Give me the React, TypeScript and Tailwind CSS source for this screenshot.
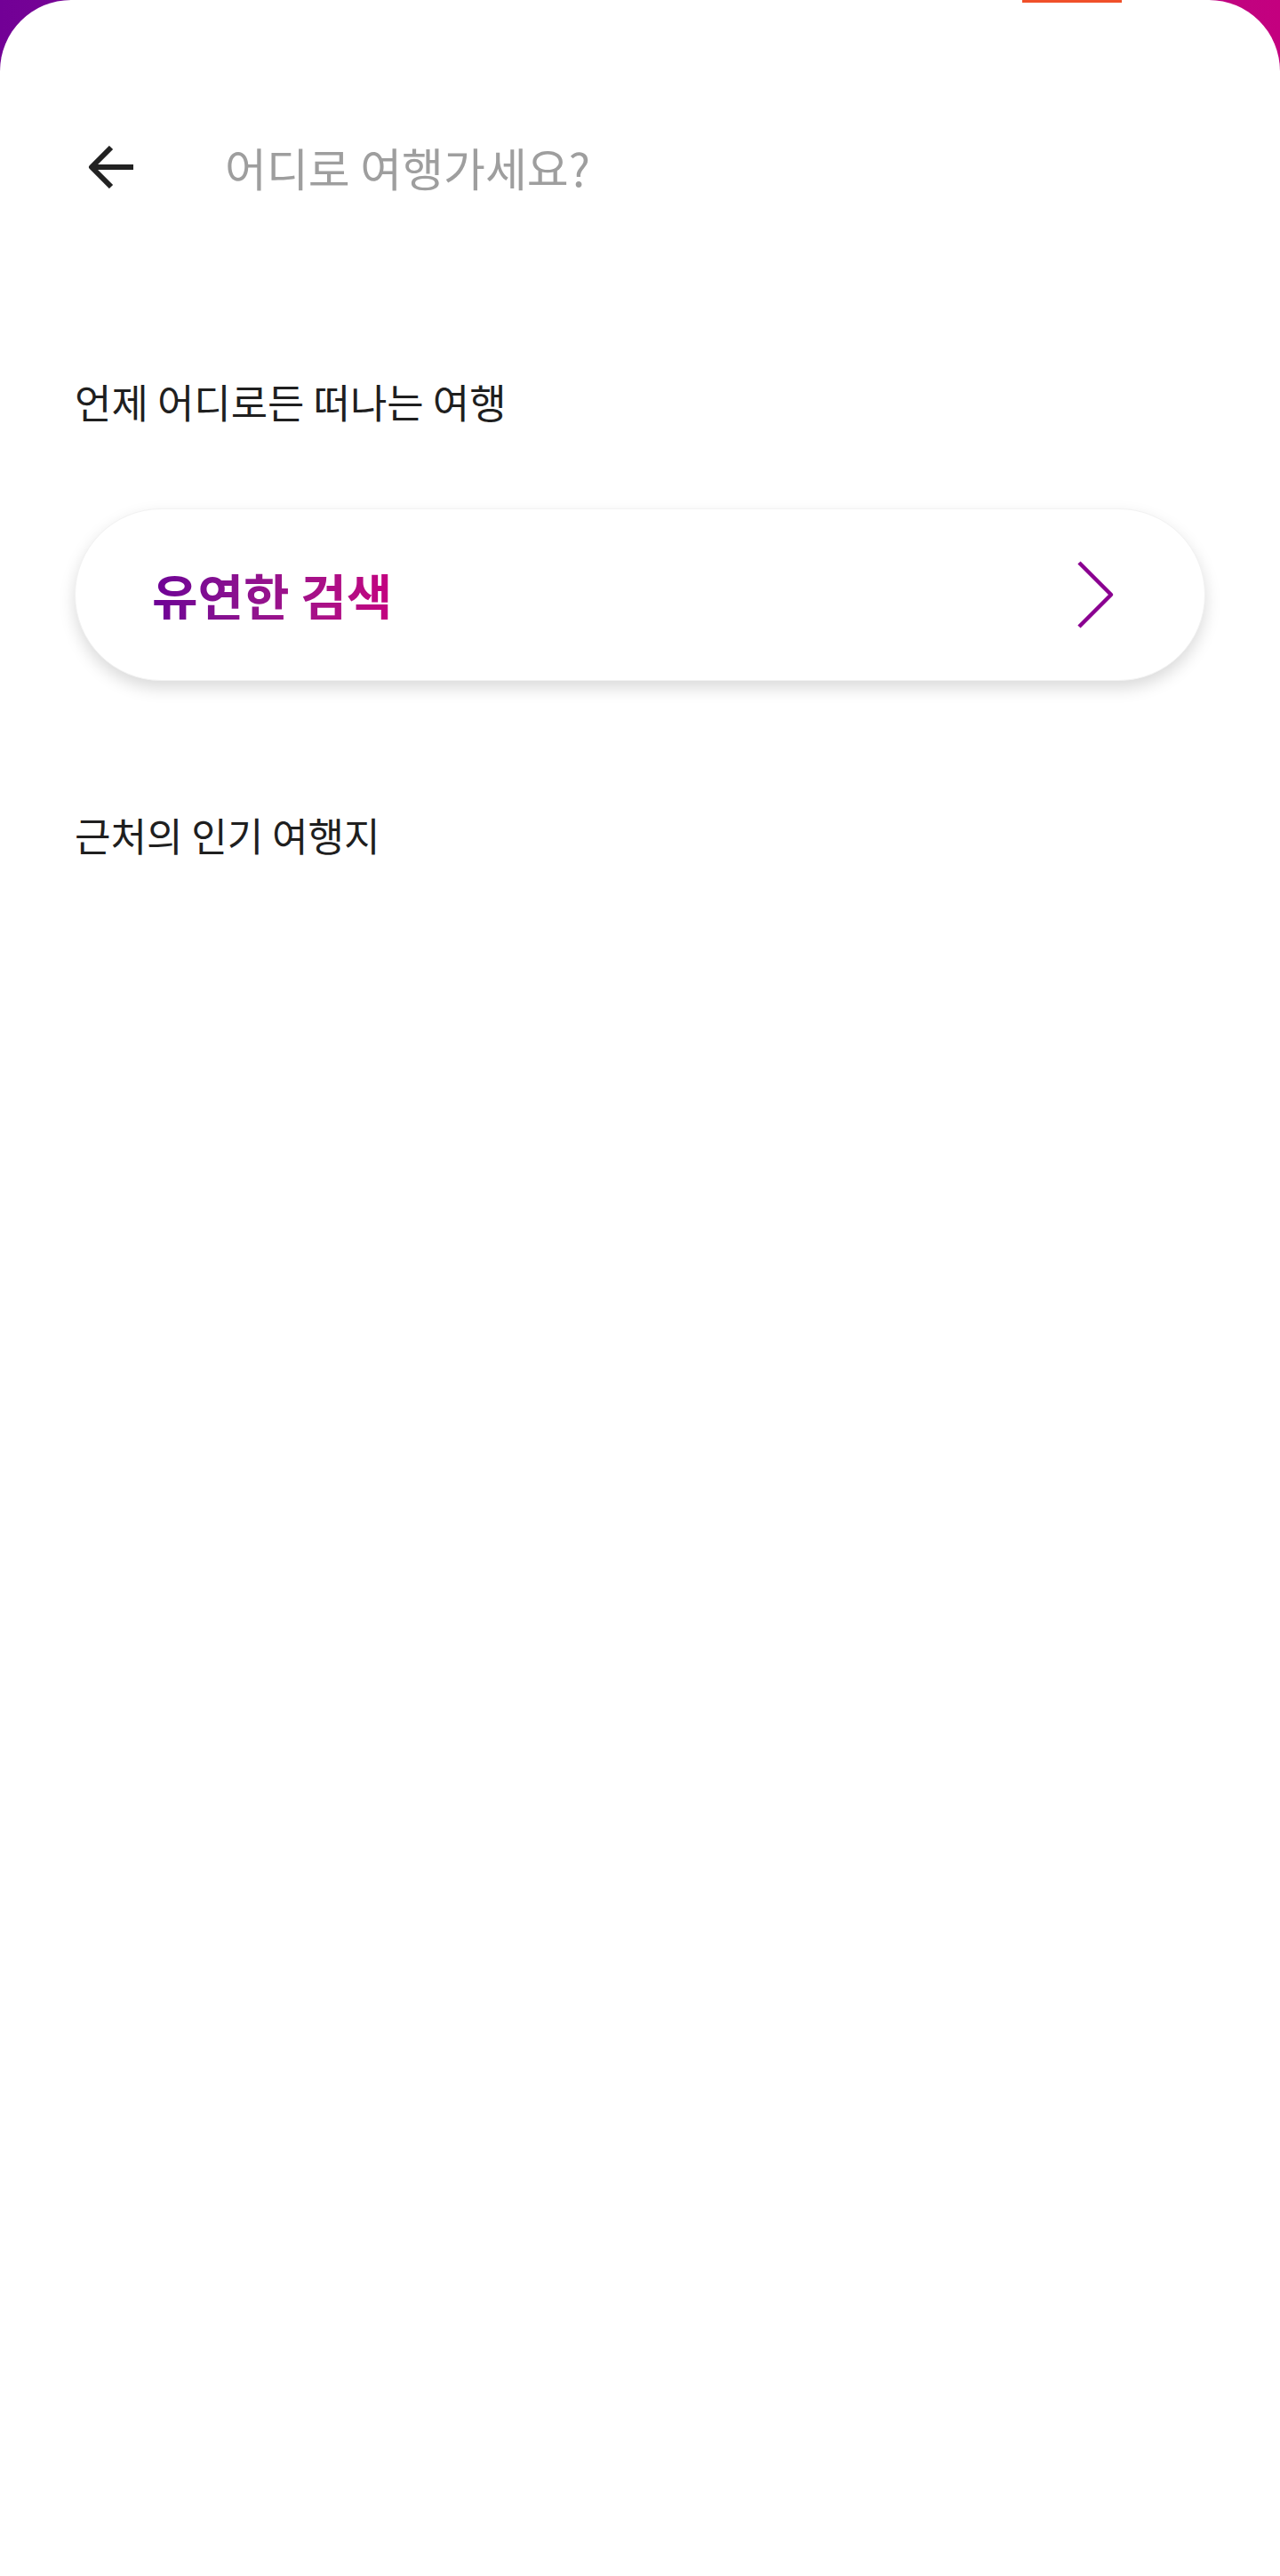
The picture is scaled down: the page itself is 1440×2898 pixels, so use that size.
import React from "react";

const font = { fontFamily: '"Noto Sans CJK KR", "Noto Sans", sans-serif' };

const BackArrow = () => (
  <svg width="52" height="48" viewBox="0 0 52 48" fill="none">
    <path d="M51 24H6" stroke="#222222" strokeWidth="6" />
    <path d="M26 2L4 24L26 46" stroke="#222222" strokeWidth="6" strokeLinejoin="round" />
  </svg>
);

const Chevron = () => (
  <svg width="44" height="78" viewBox="0 0 44 78" fill="none">
    <path d="M3 3L39 39L3 75" stroke="#8a0090" strokeWidth="4.5" strokeLinejoin="round" />
  </svg>
);

export default function App() {
  return (
    <div
      className="relative h-screen w-full bg-gradient-to-r from-[#720096] to-[#c4007f]"
      style={font}
    >
      {/* status bar 잔상 */}
      <div className="absolute left-[1150px] top-0 h-[3px] w-[112px] bg-[#f0502a]" />

      <div className="h-full w-full rounded-t-[80px] bg-white">
        <div className="box-content flex h-[100px] items-center pl-[99px] pt-[138px]">
          <BackArrow />
          <p className="ml-[102px] text-[51px] leading-none text-[#9e9e9e]">
            어디로 여행가세요?
          </p>
        </div>

        <div className="px-[84px]">
          <p className="mt-[191px] text-[45px] leading-none text-[#1f1f1f]">
            언제 어디로든 떠나는 여행
          </p>

          <div className="mt-[98px] flex h-[194px] items-center justify-between rounded-full border border-[#f2f2f2] bg-white pl-[86px] pr-[100px] shadow-[0_8px_18px_rgba(0,0,0,0.15)]">
            <span className="bg-gradient-to-r from-[#6d0096] to-[#c4007f] bg-clip-text text-[56px] font-bold leading-none text-transparent">
              유연한 검색
            </span>
            <Chevron />
          </div>

          <p className="mt-[151px] text-[44px] leading-none text-[#1f1f1f]">
            근처의 인기 여행지
          </p>
        </div>
      </div>
    </div>
  );
}
